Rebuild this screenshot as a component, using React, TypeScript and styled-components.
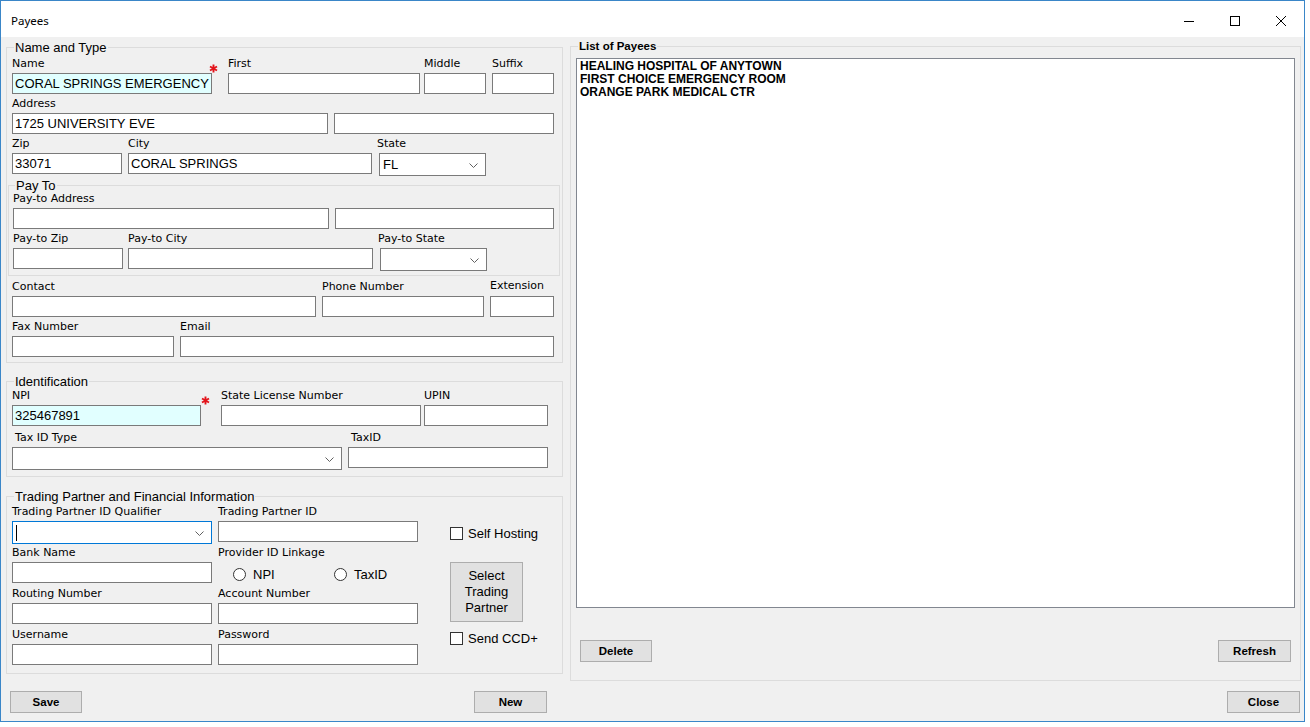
import React from "react";
import styled, { createGlobalStyle } from "styled-components";

const UI = `"Liberation Sans", Arial, sans-serif`;
const LABEL = `"DejaVu Sans", Tahoma, Verdana, sans-serif`;

const GlobalStyle = createGlobalStyle`
  html, body {
    margin: 0;
    padding: 0;
    background: #ffffff;
  }
  * {
    box-sizing: border-box;
  }
`;

export default function App() {
    return (
        <>
            <GlobalStyle />
            <Window>
                <TitleBar>
                    <Caption>Payees</Caption>
                    <CaptionButton aria-label="Minimize">
                        <svg width="10" height="10" viewBox="0 0 10 10">
                            <path d="M0 5.5H10" stroke="#000" strokeWidth="1" />
                        </svg>
                    </CaptionButton>
                    <CaptionButton aria-label="Maximize">
                        <svg width="10" height="10" viewBox="0 0 10 10">
                            <rect x="0.5" y="0.5" width="9" height="9" fill="none" stroke="#000" strokeWidth="1" />
                        </svg>
                    </CaptionButton>
                    <CaptionButton aria-label="Close">
                        <svg width="10" height="10" viewBox="0 0 10 10">
                            <path d="M0 0L10 10M10 0L0 10" stroke="#000" strokeWidth="1" />
                        </svg>
                    </CaptionButton>
                </TitleBar>

                <Body>
                    <LeftPane>
                        <Group $mt={10} $pb={5}>
                            <GroupTitle>Name and Type</GroupTitle>
                            <Row $mt={2}>
                                <Field $w={200}>
                                    <Label>Name</Label>
                                    <TextBox $required>CORAL SPRINGS EMERGENCY</TextBox>
                                    <RequiredMark $left={197} $top={7} />
                                </Field>
                                <Field $w={192} $ml={16}>
                                    <Label>First</Label>
                                    <TextBox />
                                </Field>
                                <Field $w={62} $ml={4}>
                                    <Label>Middle</Label>
                                    <TextBox />
                                </Field>
                                <Field $w={62} $ml={6}>
                                    <Label>Suffix</Label>
                                    <TextBox />
                                </Field>
                            </Row>
                            <Row $mt={3}>
                                <Field $w={316}>
                                    <Label>Address</Label>
                                    <TextBox>1725 UNIVERSITY EVE</TextBox>
                                </Field>
                                <Field $w={220} $ml={6}>
                                    <Label>&nbsp;</Label>
                                    <TextBox />
                                </Field>
                            </Row>
                            <Row $mt={3}>
                                <Field $w={110}>
                                    <Label>Zip</Label>
                                    <TextBox>33071</TextBox>
                                </Field>
                                <Field $w={244} $ml={6}>
                                    <Label>City</Label>
                                    <TextBox>CORAL SPRINGS</TextBox>
                                </Field>
                                <Field $w={107} $ml={7}>
                                    <Label $indent={-2}>State</Label>
                                    <Combo>
                                        <ComboValue>FL</ComboValue>
                                        <Chevron />
                                    </Combo>
                                </Field>
                            </Row>

                            <SubGroup $mt={11} $pb={6}>
                                <GroupTitle>Pay To</GroupTitle>
                                <Row $mt={-1}>
                                    <Field $w={316}>
                                        <Label>Pay-to Address</Label>
                                        <TextBox />
                                    </Field>
                                    <Field $w={219} $ml={6}>
                                        <Label>&nbsp;</Label>
                                        <TextBox />
                                    </Field>
                                </Row>
                                <Row $mt={3}>
                                    <Field $w={110}>
                                        <Label>Pay-to Zip</Label>
                                        <TextBox />
                                    </Field>
                                    <Field $w={245} $ml={5}>
                                        <Label>Pay-to City</Label>
                                        <TextBox />
                                    </Field>
                                    <Field $w={107} $ml={7}>
                                        <Label $indent={-2}>Pay-to State</Label>
                                        <Combo>
                                            <ComboValue />
                                            <Chevron />
                                        </Combo>
                                    </Field>
                                </Row>
                            </SubGroup>

                            <Row $mt={4}>
                                <Field $w={304}>
                                    <Label>Contact</Label>
                                    <TextBox />
                                </Field>
                                <Field $w={162} $ml={6}>
                                    <Label>Phone Number</Label>
                                    <TextBox />
                                </Field>
                                <Field $w={64} $ml={6}>
                                    <Label $lift={1}>Extension</Label>
                                    <TextBox />
                                </Field>
                            </Row>
                            <Row $mt={3}>
                                <Field $w={162}>
                                    <Label>Fax Number</Label>
                                    <TextBox />
                                </Field>
                                <Field $w={374} $ml={6}>
                                    <Label>Email</Label>
                                    <TextBox />
                                </Field>
                            </Row>
                        </Group>

                        <Group $mt={18} $pb={8}>
                            <GroupTitle>Identification</GroupTitle>
                            <Row>
                                <Field $w={189}>
                                    <Label>NPI</Label>
                                    <TextBox $required>325467891</TextBox>
                                    <RequiredMark $left={189} $top={7} />
                                </Field>
                                <Field $w={200} $ml={20}>
                                    <Label>State License Number</Label>
                                    <TextBox />
                                </Field>
                                <Field $w={124} $ml={3}>
                                    <Label>UPIN</Label>
                                    <TextBox />
                                </Field>
                            </Row>
                            <Row $mt={5}>
                                <Field $w={330}>
                                    <Label $indent={3}>Tax ID Type</Label>
                                    <Combo>
                                        <ComboValue />
                                        <Chevron />
                                    </Combo>
                                </Field>
                                <Field $w={200} $ml={6}>
                                    <Label $indent={3}>TaxID</Label>
                                    <TextBox />
                                </Field>
                            </Row>
                        </Group>

                        <Group $mt={19} $pb={8}>
                            <GroupTitle>Trading Partner and Financial Information</GroupTitle>
                            <TradingBody>
                                <TradingGrid>
                                    <Field $w={200}>
                                        <Label>Trading Partner ID Qualifier</Label>
                                        <Combo $focused>
                                            <ComboValue>
                                                <Caret />
                                            </ComboValue>
                                            <Chevron />
                                        </Combo>
                                    </Field>
                                    <Field $w={200}>
                                        <Label>Trading Partner ID</Label>
                                        <TextBox />
                                    </Field>
                                    <Field $w={200}>
                                        <Label>Bank Name</Label>
                                        <TextBox />
                                    </Field>
                                    <Field $w={200}>
                                        <Label>Provider ID Linkage</Label>
                                        <RadioRow>
                                            <Option $w={101}>
                                                <RadioDot />
                                                NPI
                                            </Option>
                                            <Option>
                                                <RadioDot />
                                                TaxID
                                            </Option>
                                        </RadioRow>
                                    </Field>
                                    <Field $w={200}>
                                        <Label>Routing Number</Label>
                                        <TextBox />
                                    </Field>
                                    <Field $w={200}>
                                        <Label>Account Number</Label>
                                        <TextBox />
                                    </Field>
                                    <Field $w={200}>
                                        <Label>Username</Label>
                                        <TextBox />
                                    </Field>
                                    <Field $w={200}>
                                        <Label>Password</Label>
                                        <TextBox />
                                    </Field>
                                </TradingGrid>
                                <SideColumn>
                                    <CheckRow $mt={21}>
                                        <CheckBox />
                                        Self Hosting
                                    </CheckRow>
                                    <TallButton>
                                        Select
                                        <br />
                                        Trading
                                        <br />
                                        Partner
                                    </TallButton>
                                    <CheckRow $mt={9}>
                                        <CheckBox />
                                        Send CCD+
                                    </CheckRow>
                                </SideColumn>
                            </TradingBody>
                        </Group>

                        <ButtonRow $mt={17} $pl={4} $pr={16}>
                            <Button $w={72}>Save</Button>
                            <Button $w={73}>New</Button>
                        </ButtonRow>
                    </LeftPane>

                    <RightPane>
                        <Group $mt={9} $pb={18}>
                            <GroupTitle $bold>List of Payees</GroupTitle>
                            <ListBox>
                                <ListItem>HEALING HOSPITAL OF ANYTOWN</ListItem>
                                <ListItem>FIRST CHOICE EMERGENCY ROOM</ListItem>
                                <ListItem>ORANGE PARK MEDICAL CTR</ListItem>
                            </ListBox>
                            <ButtonRow $mt={32} $pl={4} $pr={4}>
                                <Button $w={72}>Delete</Button>
                                <Button $w={73}>Refresh</Button>
                            </ButtonRow>
                        </Group>
                        <ButtonRow $mt={10} $pl={0} $pr={1} $end>
                            <Button $w={73}>Close</Button>
                        </ButtonRow>
                    </RightPane>
                </Body>
            </Window>
        </>
    );
}

function Chevron() {
    return (
        <ChevronIcon width="9" height="5" viewBox="0 0 9 5">
            <path d="M0.5 0.5L4.5 4.5L8.5 0.5" fill="none" stroke="#606060" strokeWidth="1" />
        </ChevronIcon>
    );
}

function RequiredMark({ $left, $top }: { $left: number; $top: number }) {
    return (
        <Asterisk $left={$left} $top={$top} width="9" height="9" viewBox="0 0 9 9">
            <path d="M4.5 0.5V8.5M1 2.5L8 6.5M8 2.5L1 6.5" stroke="#e3141b" strokeWidth="1.9" />
        </Asterisk>
    );
}

const Window = styled.div`
    width: 1305px;
    height: 722px;
    border: 1px solid #3a86c8;
    display: flex;
    flex-direction: column;
    background: #f0f0f0;
`;

const TitleBar = styled.div`
    height: 36px;
    flex: none;
    display: flex;
    align-items: stretch;
    background: #ffffff;
`;

const Caption = styled.div`
    flex: 1;
    padding: 12px 0 0 10px;
    font-family: "Noto Sans", "Open Sans", sans-serif;
    font-size: 11.5px;
    color: #000;
`;

const CaptionButton = styled.div`
    width: 46px;
    display: flex;
    align-items: center;
    justify-content: center;
    padding-top: 3px;
`;

const Body = styled.div`
    flex: 1;
    display: flex;
    gap: 7px;
    padding: 0 3px 0 5px;
`;

const LeftPane = styled.div`
    width: 557px;
    flex: none;
    display: flex;
    flex-direction: column;
`;

const RightPane = styled.div`
    width: 731px;
    flex: none;
    display: flex;
    flex-direction: column;
`;

const Group = styled.section<{ $mt: number; $pb: number }>`
    margin-top: ${p => p.$mt}px;
    border: 1px solid #dcdcdc;
    padding: 0 5px ${p => p.$pb}px 5px;
`;

const SubGroup = styled(Group)`
    margin-left: -4px;
    margin-right: -3px;
    padding-left: 4px;
    padding-right: 4px;
`;

const GroupTitle = styled.div<{ $bold?: boolean }>`
    width: fit-content;
    height: 15px;
    margin: -8px 0 0 2px;
    padding: 0 1px;
    background: #f0f0f0;
    font-family: ${UI};
    font-size: ${p => (p.$bold ? "11.5px" : "13px")};
    font-weight: ${p => (p.$bold ? "bold" : "normal")};
    line-height: 15px;
    color: #000;
`;

const Row = styled.div<{ $mt?: number }>`
    display: flex;
    height: 37px;
    margin-top: ${p => p.$mt ?? 0}px;
`;

const Field = styled.div<{ $w: number; $ml?: number }>`
    position: relative;
    flex: none;
    width: ${p => p.$w}px;
    margin-left: ${p => p.$ml ?? 0}px;
`;

const Label = styled.div<{ $indent?: number; $lift?: number }>`
    height: 13px;
    margin: ${p => -(p.$lift ?? 0)}px 0 ${p => 3 + (p.$lift ?? 0)}px ${p => p.$indent ?? 0}px;
    font-family: ${LABEL};
    font-size: 11px;
    line-height: 14px;
    color: #000;
    white-space: nowrap;
`;

const TextBox = styled.div<{ $required?: boolean }>`
    height: 21px;
    border: 1px solid #7a7a7a;
    background: ${p => (p.$required ? "#e1ffff" : "#ffffff")};
    padding: 0 2px;
    font-family: ${UI};
    font-size: 13px;
    line-height: 19px;
    color: #000;
    white-space: nowrap;
    overflow: hidden;
`;

const Combo = styled.div<{ $focused?: boolean }>`
    height: 23px;
    display: flex;
    align-items: center;
    border: 1px solid ${p => (p.$focused ? "#0078d7" : "#7a7a7a")};
    background: #ffffff;
    padding: 0 7px 0 3px;
`;

const ComboValue = styled.div`
    flex: 1;
    display: flex;
    align-items: center;
    font-family: ${UI};
    font-size: 13px;
    line-height: 21px;
    color: #000;
`;

const Caret = styled.span`
    width: 1px;
    height: 16px;
    background: #000;
`;

const ChevronIcon = styled.svg`
    flex: none;
    margin-top: 1px;
`;

const Asterisk = styled.svg<{ $left: number; $top: number }>`
    position: absolute;
    left: ${p => p.$left}px;
    top: ${p => p.$top}px;
`;

const TradingBody = styled.div`
    display: flex;
    margin-top: 1px;
`;

const TradingGrid = styled.div`
    display: grid;
    grid-template-columns: 200px 200px;
    grid-auto-rows: 37px;
    column-gap: 6px;
    row-gap: 4px;
`;

const RadioRow = styled.div`
    display: flex;
    margin-top: 6px;
    padding-left: 15px;
`;

const Option = styled.label<{ $w?: number }>`
    display: flex;
    align-items: center;
    gap: 7px;
    height: 19px;
    width: ${p => (p.$w ? `${p.$w}px` : "auto")};
    font-family: ${UI};
    font-size: 13px;
    color: #000;
`;

const RadioDot = styled.span`
    width: 13px;
    height: 13px;
    flex: none;
    border: 1px solid #333333;
    border-radius: 50%;
    background: #ffffff;
`;

const SideColumn = styled.div`
    display: flex;
    flex-direction: column;
    margin-left: 32px;
`;

const CheckRow = styled.label<{ $mt: number }>`
    display: flex;
    align-items: center;
    gap: 5px;
    height: 15px;
    margin-top: ${p => p.$mt}px;
    font-family: ${UI};
    font-size: 13px;
    color: #000;
    white-space: nowrap;
`;

const CheckBox = styled.span`
    width: 13px;
    height: 13px;
    flex: none;
    border: 1px solid #333333;
    background: #ffffff;
`;

const Button = styled.button<{ $w: number }>`
    width: ${p => p.$w}px;
    height: 22px;
    padding: 0;
    border: 1px solid #adadad;
    background: #e1e1e1;
    font-family: ${UI};
    font-size: 11.5px;
    font-weight: bold;
    color: #000;
`;

const TallButton = styled(Button).attrs({ $w: 73 })`
    height: 60px;
    margin-top: 21px;
    font-size: 13px;
    font-weight: normal;
    line-height: 16px;
`;

const ButtonRow = styled.div<{ $mt: number; $pl: number; $pr: number; $end?: boolean }>`
    display: flex;
    justify-content: ${p => (p.$end ? "flex-end" : "space-between")};
    margin-top: ${p => p.$mt}px;
    padding: 0 ${p => p.$pr}px 0 ${p => p.$pl}px;
`;

const ListBox = styled.div`
    height: 550px;
    margin-top: 4px;
    padding: 1px 3px;
    border: 1px solid #828790;
    background: #ffffff;
`;

const ListItem = styled.div`
    font-family: ${UI};
    font-size: 12px;
    font-weight: bold;
    line-height: 13px;
    color: #000;
    white-space: nowrap;
`;
